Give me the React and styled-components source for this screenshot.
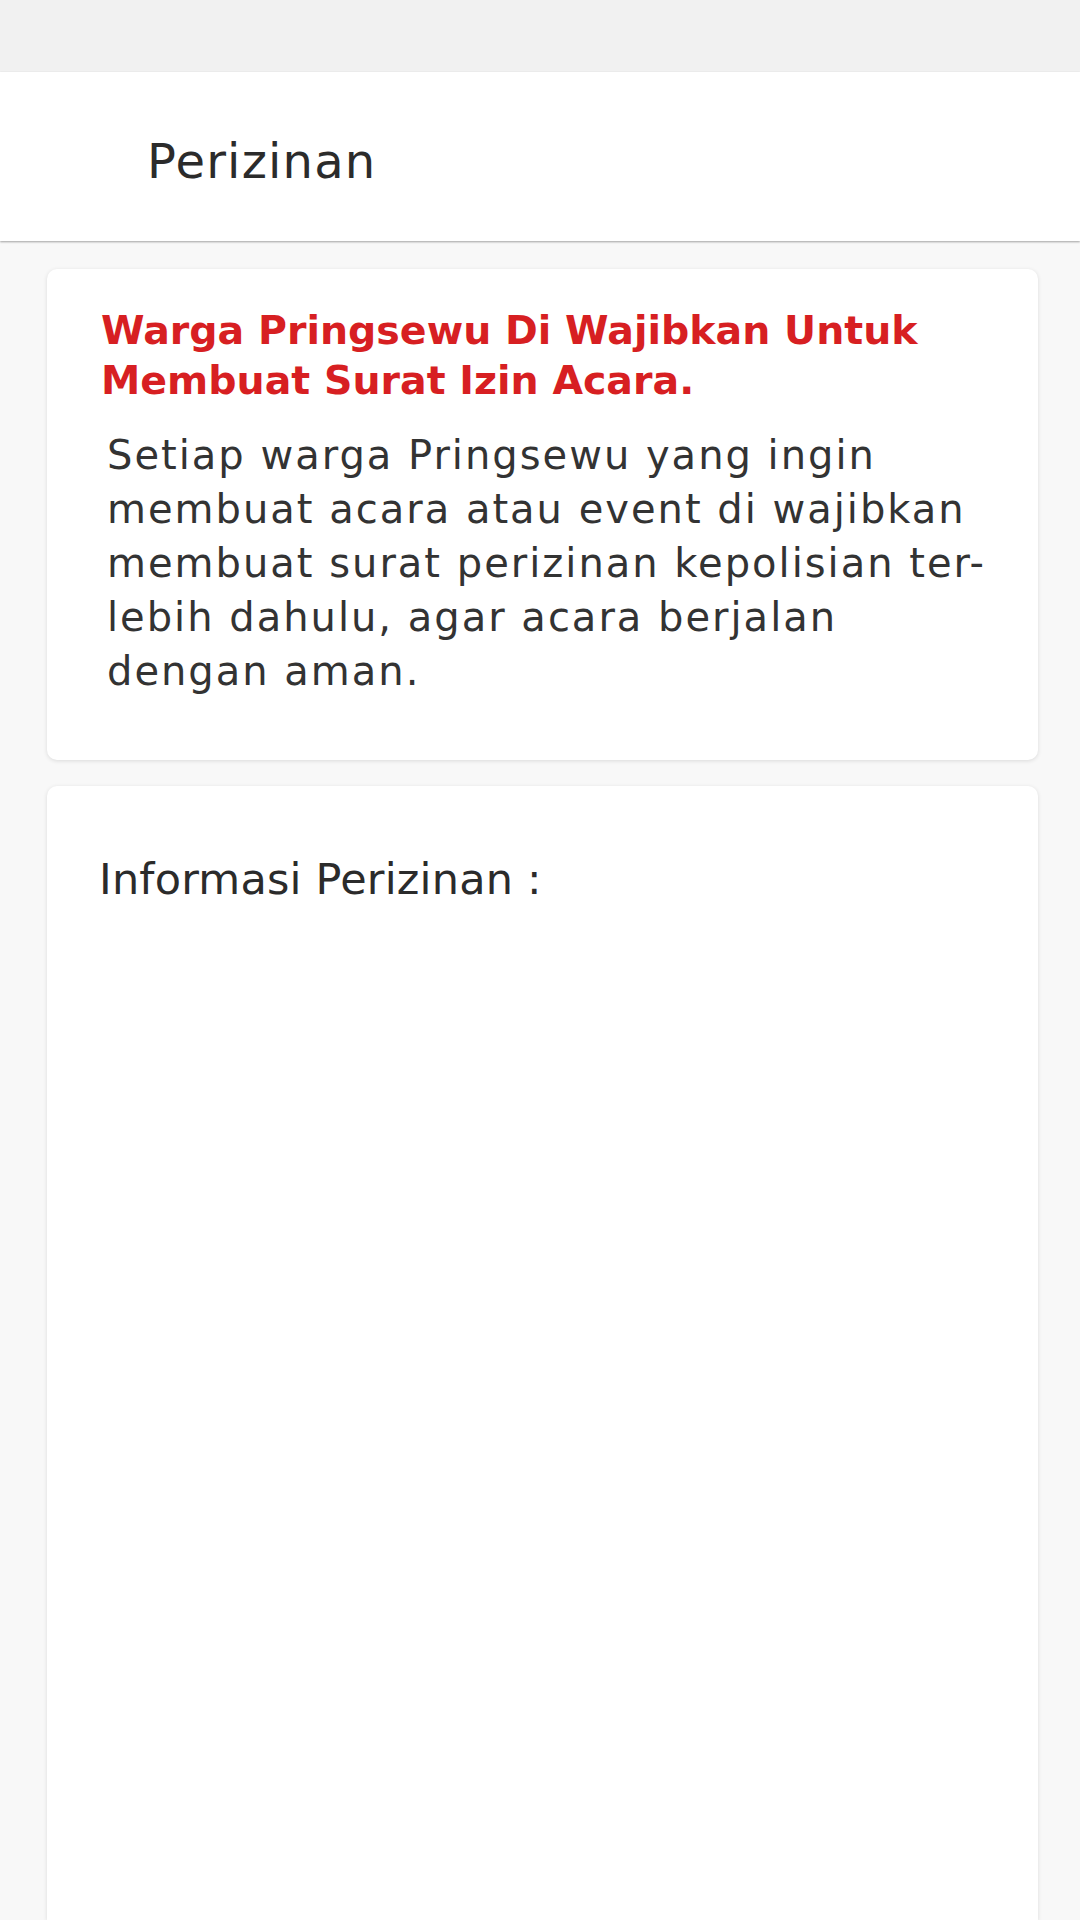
import React from "react";
import styled, { createGlobalStyle } from "styled-components";

const GlobalStyle = createGlobalStyle`
    html, body {
        margin: 0;
        padding: 0;
        background: #f8f8f8;
        font-family: "DejaVu Sans", "Noto Sans", sans-serif;
        color: #333333;
    }
    #root {
        min-height: 1920px;
        display: flex;
        flex-direction: column;
    }
`;

const bodyLines = [
    "Setiap warga Pringsewu yang ingin",
    "membuat acara atau event di wajibkan",
    "membuat surat perizinan kepolisian ter-",
    "lebih dahulu, agar acara berjalan",
    "dengan aman.",
];

const App = () => {
    return (
        <>
            <GlobalStyle />
            <StatusBar />
            <Header>
                <Title>Perizinan</Title>
            </Header>
            <Content>
                <Card>
                    <Headline>
                        Warga Pringsewu Di Wajibkan Untuk
                        <br />
                        Membuat Surat Izin Acara.
                    </Headline>
                    <Body>
                        {bodyLines.map((line) => (
                            <Line key={line}>{line}</Line>
                        ))}
                    </Body>
                </Card>
                <InfoCard>
                    <InfoTitle>Informasi Perizinan :</InfoTitle>
                </InfoCard>
            </Content>
        </>
    );
};

export default App;

const StatusBar = styled.div`
    height: 72px;
    background: #f1f1f1;
    flex-shrink: 0;
`;
const Header = styled.header`
    height: 169px;
    background: #ffffff;
    display: flex;
    align-items: center;
    padding-left: 147px;
    box-shadow: 0 1px 2px rgba(0, 0, 0, 0.35);
    position: relative;
    z-index: 2;
    flex-shrink: 0;
`;
const Title = styled.h1`
    margin: 0;
    font-size: 48px;
    font-weight: 400;
    color: #2b2b2b;
    letter-spacing: 1.2px;
    transform: translateY(4px);
`;
const Content = styled.main`
    flex: 1;
    display: flex;
    flex-direction: column;
    gap: 26px;
    padding: 28px 42px 0 47px;
`;
const Card = styled.section`
    background: #ffffff;
    border-radius: 10px;
    box-shadow: 0 1px 4px rgba(0, 0, 0, 0.12);
    padding: 36px 54px 62px 54px;
`;
const InfoCard = styled(Card)`
    flex: 1;
    border-radius: 10px 10px 0 0;
    padding: 66px 52px 0 52px;
`;
const Headline = styled.h2`
    margin: 0 0 23px 0;
    font-size: 39.5px;
    line-height: 50px;
    font-weight: 600;
    color: #d71f22;
`;
const Body = styled.div`
    padding-left: 6px;
    font-size: 40px;
    line-height: 54px;
    letter-spacing: 2px;
    color: #333333;
`;
const Line = styled.div`
    white-space: nowrap;
`;
const InfoTitle = styled.h3`
    margin: 0;
    font-size: 43px;
    line-height: 54px;
    font-weight: 400;
    letter-spacing: 0.2px;
    color: #2b2b2b;
`;
